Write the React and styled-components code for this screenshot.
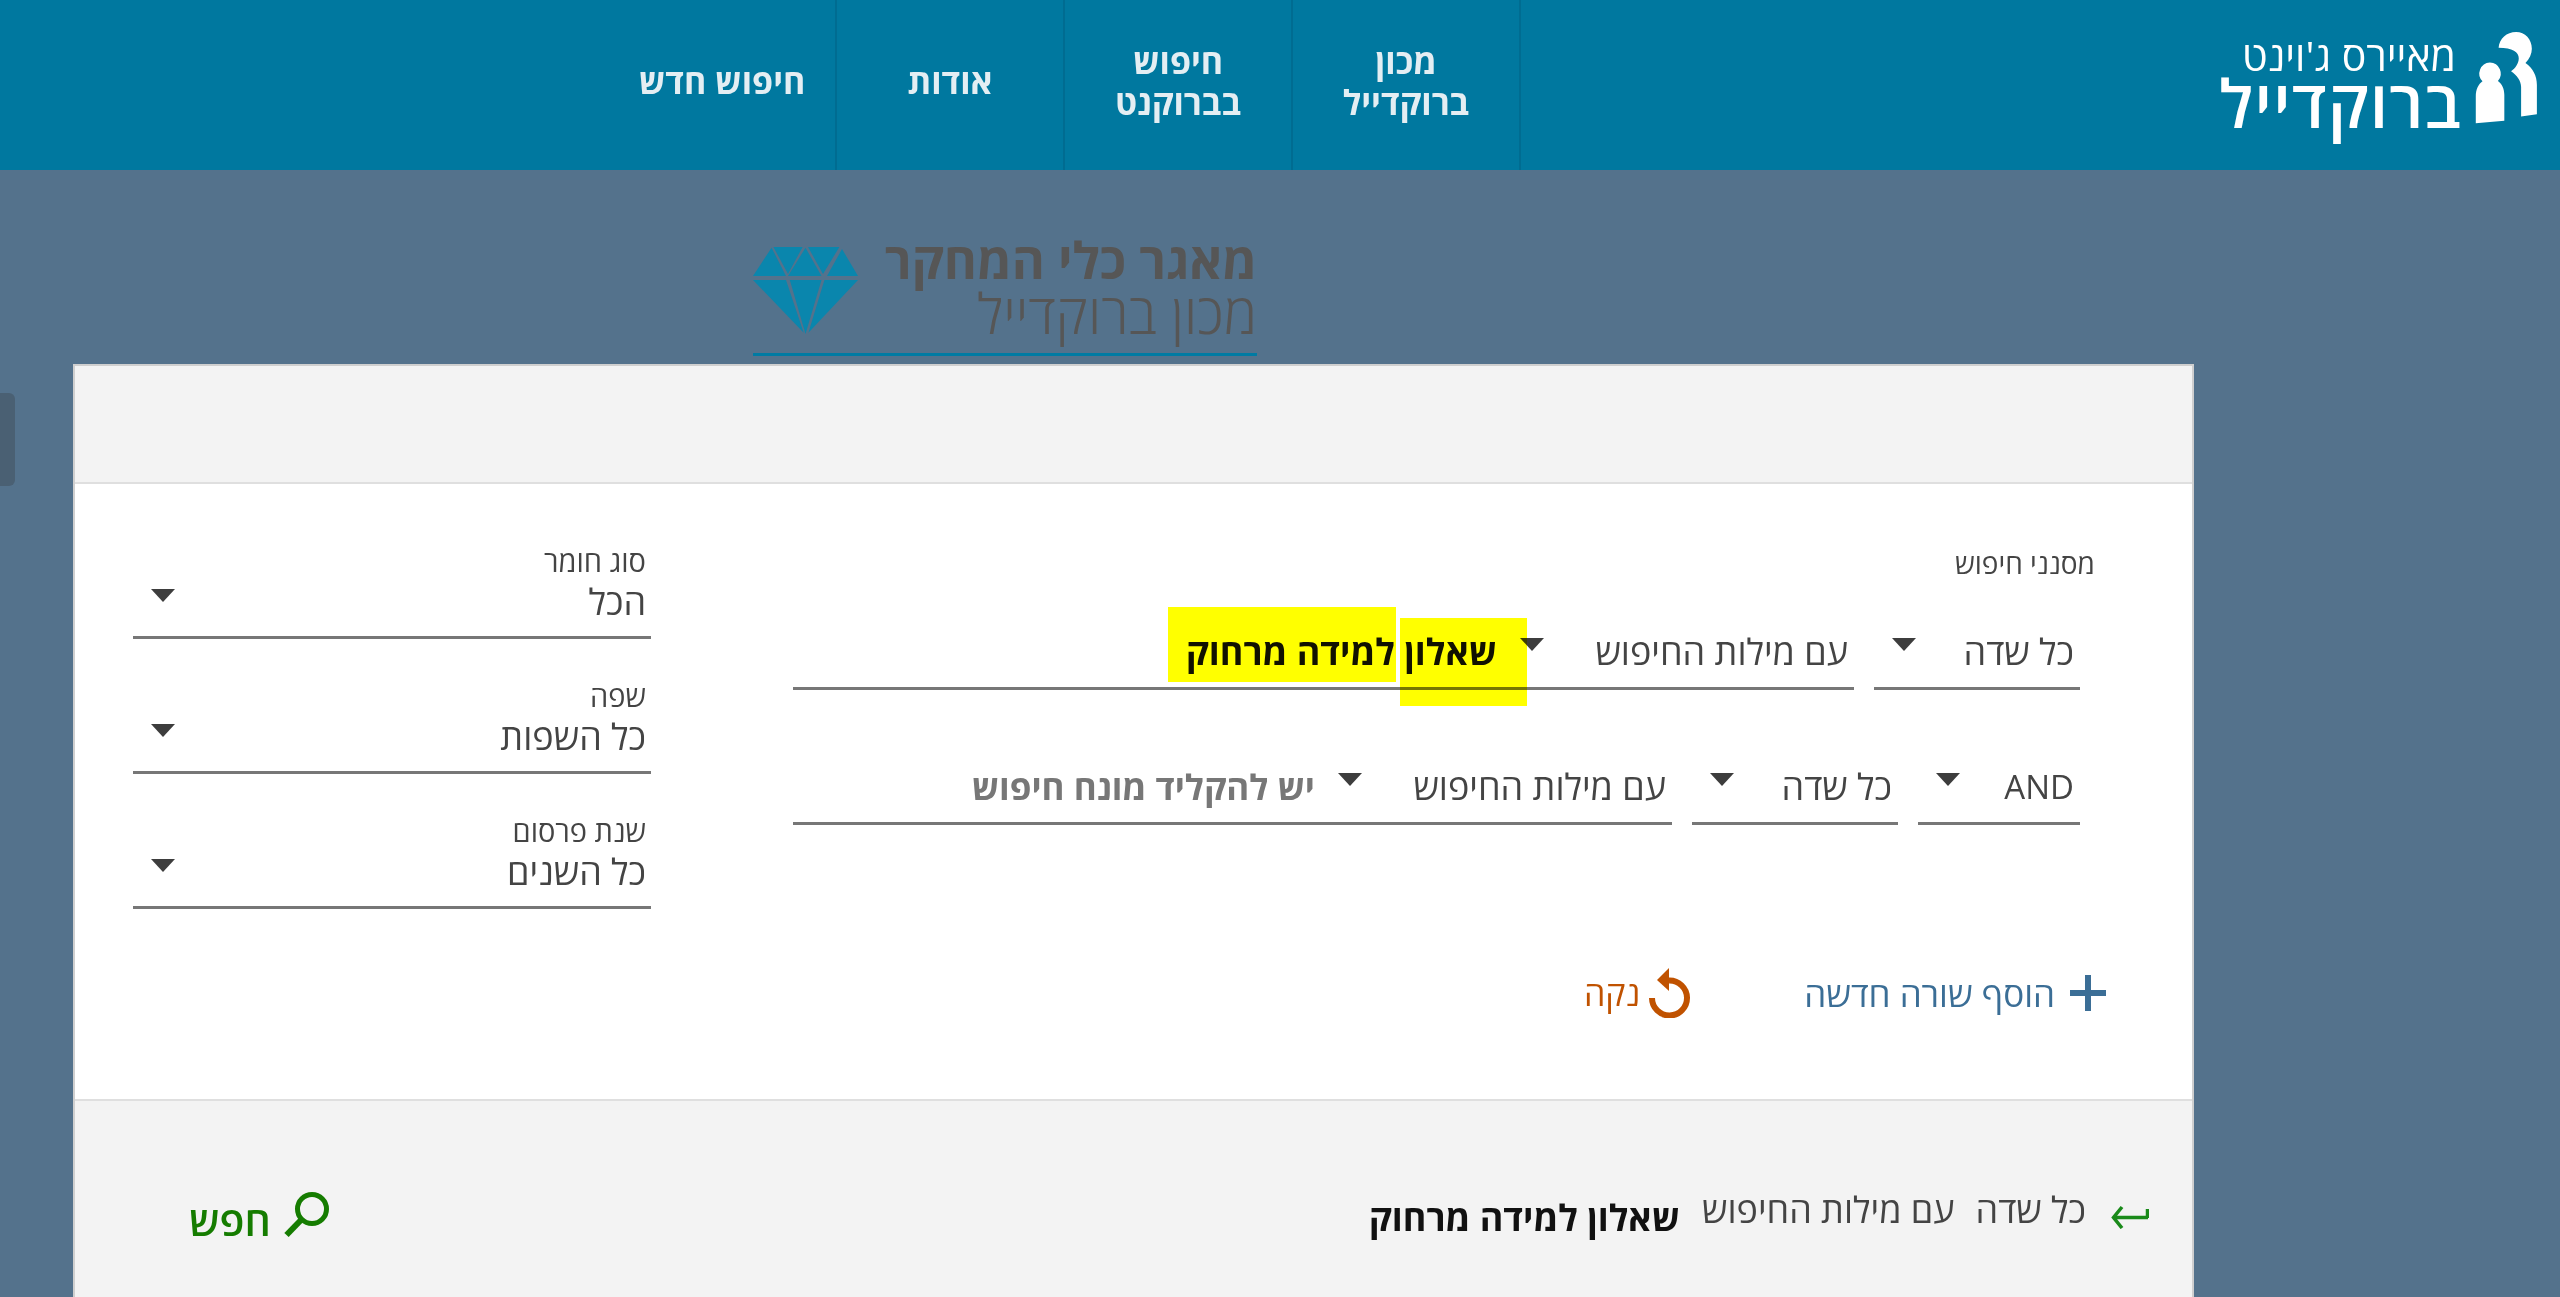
import React from "react";
import styled, { createGlobalStyle } from "styled-components";

const Global = createGlobalStyle`
  html, body { margin: 0; height: 100%; overflow: hidden; background: #54728c; }
  body { font-family: "Open Sans", "Liberation Sans", "DejaVu Sans", sans-serif; color: #444; }
  * { box-sizing: border-box; }
`;

const Page = styled.div`
  direction: rtl;
  position: relative;
  height: 1297px;
  overflow: hidden;
`;
const Header = styled.header`
  display: flex;
  height: 170px;
  background: #00789f;
`;
const Logo = styled.div`
  display: flex;
  width: 1039px;
  padding: 31px 22px 0 0;
  align-items: flex-start;
  gap: 12px;
`;
const LogoMark = styled.svg`
  width: 64px;
  height: 94px;
  flex: none;
`;
const LogoText = styled.div`
  color: #fff;
  display: flex;
  flex-direction: column;
  align-items: flex-start;
  margin-top: 2px;
`;
const LogoTop = styled.span`
  font-size: 41px;
  line-height: 44px;
  font-weight: 400;
  margin-right: 6px;
`;
const LogoBottom = styled.span`
  font-size: 66px;
  line-height: 50px;
  font-weight: 600;
  letter-spacing: 1.2px;
`;
const Nav = styled.nav`
  display: flex;
`;
const NavItem = styled.a`
  width: 228px;
  height: 170px;
  display: flex;
  align-items: center;
  justify-content: center;
  text-align: center;
  padding-bottom: 7px;
  border-right: 2px solid #006c91;
  color: #e4eef3;
  font-size: 34px;
  font-weight: 700;
  line-height: 41px;
`;
const SideTab = styled.div`
  position: absolute;
  left: 0;
  top: 393px;
  width: 15px;
  height: 93px;
  background: #4a6073;
  border-radius: 0 6px 6px 0;
`;
const Main = styled.main`
  padding: 0 366px 0 73px;
`;
const Brand = styled.div`
  display: flex;
  justify-content: space-between;
  align-items: flex-start;
  width: 504px;
  height: 186px;
  margin: 0 937px 8px 0;
  padding: 63px 0 0 0;
  border-bottom: 3px solid #007ba3;
`;
const BrandText = styled.div`
  display: flex;
  flex-direction: column;
  color: #565656;
`;
const BrandTitle = styled.span`
  font-size: 50.5px;
  font-weight: 700;
  line-height: 54px;
`;
const BrandSub = styled.span`
  font-size: 55.5px;
  font-weight: 300;
  line-height: 52px;
`;
const Diamond = styled.svg`
  width: 106px;
  height: 88px;
  margin: 14px 0 0 0;
  flex: none;
`;
const Card = styled.section`
  width: 2121px;
  border: 2px solid #cfcfcf;
  border-bottom: none;
  background: #fff;
`;
const CardTop = styled.div`
  height: 118px;
  background: #f3f3f3;
  border-bottom: 2px solid #dfdfdf;
`;
const CardBody = styled.div`
  position: relative;
  height: 615px;
  display: flex;
  justify-content: space-between;
  padding: 61px 112px 0 58px;
`;
const Filters = styled.div`
  width: 1287px;
`;
const FilterLabel = styled.div`
  font-size: 28px;
  line-height: 36px;
  margin: 0 -15px 39px 0;
`;
const FilterRow = styled.div`
  display: flex;
  gap: 20px;
  height: 70px;
  margin-bottom: ${p => (p.$last ? "0" : "65px")};
`;
const Segment = styled.div`
  display: flex;
  width: ${p => (p.$width ? `${p.$width}px` : "auto")};
  flex: ${p => (p.$width ? "none" : "1")};
  border-bottom: 3px solid #777;
  padding-right: 6px;
`;
const SelectBox = styled.div`
  display: flex;
  justify-content: space-between;
  width: ${p => (p.$width ? `${p.$width}px` : "100%")};
  padding-left: ${p => (p.$width ? "0" : "18px")};
  flex: none;
  font-size: ${p => p.$size || 36}px;
  line-height: 64px;
  color: #444;
`;
const Caret = styled.i`
  display: block;
  flex: none;
  width: 0;
  height: 0;
  margin-top: ${p => p.$top || 18}px;
  border-left: 12px solid transparent;
  border-right: 12px solid transparent;
  border-top: 13px solid #3d3d3d;
`;
const QueryText = styled.span`
  font-size: ${p => (p.$empty ? 35 : 36)}px;
  line-height: 64px;
  font-weight: 700;
  color: ${p => (p.$empty ? "#777" : "#111")};
  padding-right: 23px;
`;
const Highlight = styled.span`
  position: absolute;
  background: #ffff00;
  mix-blend-mode: multiply;
  left: ${p => p.$left}px;
  top: ${p => p.$top}px;
  width: ${p => p.$w}px;
  height: ${p => p.$h}px;
`;
const Actions = styled.div`
  display: flex;
  align-items: center;
  gap: 113px;
  height: 50px;
  margin: 143px -26px 0 0;
`;
const ActionLink = styled.a`
  display: flex;
  align-items: center;
  gap: ${p => p.$gap}px;
  font-size: ${p => p.$size}px;
  color: ${p => p.$color};
`;
const Side = styled.div`
  width: 518px;
  margin-top: 1px;
  display: flex;
  flex-direction: column;
  gap: 42px;
`;
const SideField = styled.div`
  height: 93px;
  border-bottom: 3px solid #777;
  padding-right: 5px;
`;
const SideLabel = styled.div`
  font-size: 29px;
  line-height: 30px;
  margin-bottom: 4px;
`;
const SideValue = styled.div`
  display: flex;
  justify-content: space-between;
  font-size: 36px;
  line-height: 44px;
  padding-left: 18px;
`;
const CardFooter = styled.div`
  height: 300px;
  background: #f3f3f3;
  border-top: 2px solid #dfdfdf;
  display: flex;
  justify-content: space-between;
  padding: 89px 43px 0 114px;
`;
const Query = styled.div`
  display: flex;
  align-items: flex-start;
`;
const QueryPart = styled.span`
  font-size: 36px;
  line-height: 40px;
  color: ${p => (p.$strong ? "#111" : "#444")};
  font-weight: ${p => (p.$strong ? 700 : 400)};
  margin-top: ${p => p.$top || 0}px;
  margin-right: ${p => p.$gap || 0}px;
`;
const ArrowIcon = styled.svg`
  width: 38px;
  height: 24px;
  margin: 15px 0 0 25px;
  flex: none;
`;
const SearchButton = styled.a`
  display: flex;
  align-items: flex-start;
  gap: 13px;
  color: #157c00;
  font-size: 41px;
  font-weight: 600;
  line-height: 50px;
`;
const SearchIcon = styled.svg`
  width: 46px;
  height: 46px;
  flex: none;
  margin-top: 2px;
`;
const SearchLabel = styled.span`
  margin-top: 5px;
`;

const Select = ({ label, width, top, size }) => (
  <SelectBox $width={width} $size={size}>
    <span>{label}</span>
    <Caret $top={top} />
  </SelectBox>
);

export default function App() {
  return (
    <Page>
      <Global />
      <SideTab />
      <Header>
        <Logo>
          <LogoMark viewBox="1125 95 190 280">
            <path
              fill="#fff"
              d="M1198 145C1200 118 1222 98 1250 98C1277 98 1297 120 1297 148C1297 163 1290 178 1278 190C1300 205 1312 228 1312 255L1312 343L1265 350L1265 262C1265 243 1252 226 1235 215C1248 205 1258 192 1258 176C1258 158 1240 145 1198 145Z"
            />
            <path
              fill="#fff"
              d="M1172 189A33 33 0 0 1 1196 244C1208 252 1215 268 1215 285L1215 362L1130 370L1130 290C1130 270 1138 253 1150 245A33 33 0 0 1 1172 189Z"
            />
          </LogoMark>
          <LogoText>
            <LogoTop>מאיירס ג'וינט</LogoTop>
            <LogoBottom>ברוקדייל</LogoBottom>
          </LogoText>
        </Logo>
        <Nav>
          <NavItem>מכון<br />ברוקדייל</NavItem>
          <NavItem>חיפוש<br />בברוקנט</NavItem>
          <NavItem>אודות</NavItem>
          <NavItem>חיפוש חדש</NavItem>
        </Nav>
      </Header>
      <Main>
        <Brand>
          <BrandText>
            <BrandTitle>מאגר כלי המחקר</BrandTitle>
            <BrandSub>מכון ברוקדייל</BrandSub>
          </BrandText>
          <Diamond viewBox="0 0 106 88">
            <g fill="#0a86ad">
              <polygon points="0,29 18.6,0.7 33,29" />
              <polygon points="20.4,0 49.6,0 35,27" />
              <polygon points="35,29 52.5,0.7 68.5,29" />
              <polygon points="55,0 86.4,0 70,27" />
              <polygon points="74,29 89,2 105,29" />
              <polygon points="0,33 33,33 50.7,85.7" />
              <polygon points="36.8,33 68.5,33 52.5,87" />
              <polygon points="71.4,33 105,33 55.4,85.7" />
            </g>
          </Diamond>
        </Brand>
        <Card>
          <CardTop />
          <CardBody>
            <Filters>
              <FilterLabel>מסנני חיפוש</FilterLabel>
              <FilterRow>
                <Segment $width={206}><Select label="כל שדה" /></Segment>
                <Segment>
                  <Select label="עם מילות החיפוש" width={328} />
                  <QueryText>שאלון למידה מרחוק</QueryText>
                </Segment>
              </FilterRow>
              <FilterRow $last>
                <Segment $width={162}><Select label="AND" size={33} /></Segment>
                <Segment $width={206}><Select label="כל שדה" /></Segment>
                <Segment>
                  <Select label="עם מילות החיפוש" width={328} />
                  <QueryText $empty>יש להקליד מונח חיפוש</QueryText>
                </Segment>
              </FilterRow>
              <Actions>
                <ActionLink $gap={15} $size={35} $color="#3b6e96">
                  <svg width="36" height="36" viewBox="0 0 36 36">
                    <path fill="#3b6e96" d="M15 0h6v15h15v6H21v15h-6V21H0v-6h15z" />
                  </svg>
                  הוסף שורה חדשה
                </ActionLink>
                <ActionLink $gap={9} $size={34} $color="#c05200">
                  <svg width="42" height="50" viewBox="0 0 42 50">
                    <path fill="none" stroke="#c05200" strokeWidth="6" d="M3 30a17.5 17.5 0 1 0 17-17.5" />
                    <path fill="#c05200" d="M20 0L8 12l12 11z" />
                  </svg>
                  נקה
                </ActionLink>
              </Actions>
            </Filters>
            <Side>
              <SideField>
                <SideLabel>סוג חומר</SideLabel>
                <SideValue><span>הכל</span><Caret $top={9} /></SideValue>
              </SideField>
              <SideField>
                <SideLabel>שפה</SideLabel>
                <SideValue><span>כל השפות</span><Caret $top={9} /></SideValue>
              </SideField>
              <SideField>
                <SideLabel>שנת פרסום</SideLabel>
                <SideValue><span>כל השנים</span><Caret $top={9} /></SideValue>
              </SideField>
            </Side>
            <Highlight $left={1093} $top={123} $w={228} $h={75} />
            <Highlight $left={1325} $top={134} $w={127} $h={88} />
          </CardBody>
          <CardFooter>
            <Query>
              <ArrowIcon viewBox="0 0 38 24">
                <path fill="none" stroke="#1a8a1a" strokeWidth="3.5" d="M37 12.5H3M11 2L2.5 12.5L11 23M36.5 4v9" />
              </ArrowIcon>
              <QueryPart>כל שדה</QueryPart>
              <QueryPart $gap={21}>עם מילות החיפוש</QueryPart>
              <QueryPart $gap={22} $top={8} $strong>שאלון למידה מרחוק</QueryPart>
            </Query>
            <SearchButton>
              <SearchIcon viewBox="0 0 46 46">
                <circle cx="28" cy="17" r="14.5" fill="none" stroke="#157c00" strokeWidth="5" />
                <path stroke="#157c00" strokeWidth="6" d="M17 28L2.5 43" />
              </SearchIcon>
              <SearchLabel>חפש</SearchLabel>
            </SearchButton>
          </CardFooter>
        </Card>
      </Main>
    </Page>
  );
}
